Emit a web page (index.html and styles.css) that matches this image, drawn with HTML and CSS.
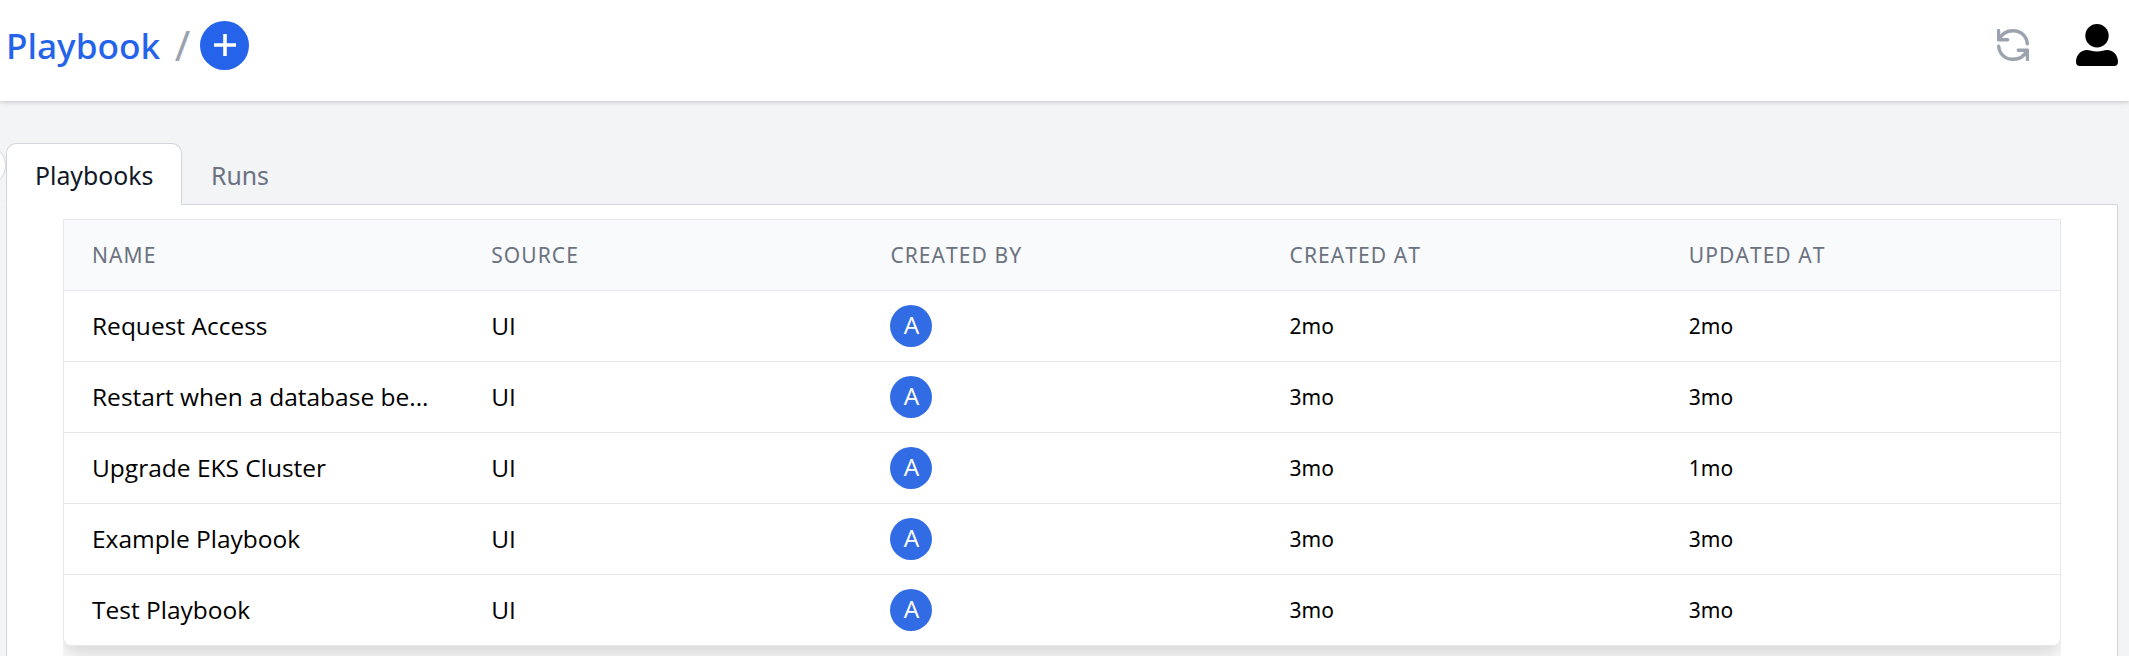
FILE: index.html
```html
<!DOCTYPE html>
<html lang="en">
<head>
<meta charset="utf-8">
<title>Playbook</title>
<link rel="stylesheet" href="styles.css">
</head>
<body>
<header class="topbar">
  <nav class="crumbs">
    <a class="crumb-link">Playbook</a>
    <span class="crumb-sep">/</span>
    <button class="add" aria-label="Add playbook">
      <svg viewBox="0 0 24 24"><path d="M12 1v22M1 12h22"/></svg>
    </button>
  </nav>
  <div class="actions">
    <svg class="refresh" viewBox="0 0 32 32"><path d="M1.5 1.5v9.2h9.2M2.1 10.5C4.6 5 9.6 1.7 16 1.7c7.8 0 13.6 5.300 14.300 13M30.500 30.500v-9.200h-9.200M29.900 21.500c-2.500 5.500-7.500 8.800-13.900 8.800-7.800 0-13.600-5.300-14.300-13"/></svg>
    <svg class="user" viewBox="0 0 42 42"><circle cx="21" cy="11.700" r="11.700"/><path d="M11 26c2.500 0 5.600 1.500 10 1.500S28.500 26 31 26c6.500 0 11 5.500 11 11.700C42 40.500 40.700 42 38 42H4c-2.700 0-4-1.500-4-4.300C0 31.500 4.500 26 11 26z"/></svg>
  </div>
</header>
<main class="content">
  <span class="handle"></span>
  <div class="tabs">
    <div class="tab tab-active">Playbooks</div>
    <div class="tab">Runs</div>
  </div>
  <section class="panel">
    <div class="clip">
      <div class="table">
        <div class="row head"><div>Name</div><div>Source</div><div>Created By</div><div>Created At</div><div>Updated At</div></div>
        <div class="row"><div class="name">Request Access</div><div class="source">UI</div><div><span class="avatar">A</span></div><div class="age">2mo</div><div class="age">2mo</div></div>
        <div class="row"><div class="name">Restart when a database be...</div><div class="source">UI</div><div><span class="avatar">A</span></div><div class="age">3mo</div><div class="age">3mo</div></div>
        <div class="row"><div class="name">Upgrade EKS Cluster</div><div class="source">UI</div><div><span class="avatar">A</span></div><div class="age">3mo</div><div class="age">1mo</div></div>
        <div class="row"><div class="name">Example Playbook</div><div class="source">UI</div><div><span class="avatar">A</span></div><div class="age">3mo</div><div class="age">3mo</div></div>
        <div class="row"><div class="name">Test Playbook</div><div class="source">UI</div><div><span class="avatar">A</span></div><div class="age">3mo</div><div class="age">3mo</div></div>
      </div>
    </div>
  </section>
</main>
</body>
</html>
```
FILE: styles.css
```css
* { box-sizing: border-box; }
body {
  margin: 0;
  height: 656px;
  overflow: hidden;
  display: flex;
  flex-direction: column;
  background: #f3f4f6;
  font-family: "Open Sans", sans-serif;
  color: #000;
}
.topbar {
  flex: none;
  height: 101px;
  padding: 0 11px 11px 6px;
  display: flex;
  align-items: center;
  justify-content: space-between;
  background: #fff;
  box-shadow: 0 2px 5px rgba(0, 0, 0, .1), 0 1px 3px rgba(0, 0, 0, .08);
}
.crumbs { display: flex; align-items: center; }
.crumb-link { font: 500 35.2px/48px "Noto Sans", sans-serif; color: #2563eb; }
.crumb-sep { margin: 0 10px 0 14.5px; font: 42px/50px "Noto Sans", sans-serif; color: #9ca3af; }
.add {
  width: 49px;
  height: 49px;
  padding: 0;
  border: 0;
  border-radius: 50%;
  display: grid;
  place-items: center;
  background: #2563eb;
}
.add svg { width: 24px; height: 24px; fill: none; stroke: #fff; stroke-width: 3.6; }
.actions { display: flex; align-items: center; gap: 47px; }
.refresh { width: 32px; height: 32px; fill: none; stroke: #9ca3af; stroke-width: 3.4; stroke-linecap: round; stroke-linejoin: round; }
.user { width: 42px; height: 42px; }
.content {
  flex: 1;
  min-height: 0;
  position: relative;
  padding: 42px 11px 0 6px;
  display: flex;
  flex-direction: column;
}
.handle {
  position: absolute;
  left: -37px;
  top: 43px;
  width: 43px;
  height: 43px;
  border: 1px solid #d1d5db;
  border-radius: 50%;
  background: #fff;
}
.tabs { flex: none; display: flex; position: relative; }
.tab {
  height: 62px;
  padding: 0 28px;
  border: 1px solid transparent;
  font: 24.8px/62px "Noto Sans", sans-serif;
  color: #6b7280;
}
.tab-active {
  width: 176px;
  border-color: #d1d5db;
  border-bottom-color: #fff;
  border-radius: 10px 10px 0 0;
  background: #fff;
  color: #111827;
}
.panel {
  flex: 1;
  min-height: 0;
  margin-top: -1px;
  padding: 14px 56px 0;
  border: 1px solid #d1d5db;
  border-bottom: 0;
  background: #fff;
}
.clip { height: 100%; overflow: hidden; }
.table {
  border: 1px solid #e5e7eb;
  border-radius: 0 0 8px 8px;
  box-shadow: 0 10px 18px rgba(0, 0, 0, .15);
}
.row {
  height: 71px;
  display: grid;
  grid-template-columns: repeat(5, 1fr);
  align-items: center;
  border-bottom: 1px solid #e5e7eb;
  font-size: 24.5px;
}
.row:last-child { border-bottom: 0; height: 70px; }
.row > div { padding: 0 28px; }
.head {
  background: #f9fafb;
  color: #6b7280;
  font: 21px/28px "Noto Sans", sans-serif;
  font-kerning: none;
  letter-spacing: 1.07px;
  text-transform: uppercase;
}
.name, .source { line-height: 36px; white-space: nowrap; }
.age { font: 21px/28px "Noto Sans", sans-serif; }
.avatar {
  width: 42px;
  height: 42px;
  border-radius: 50%;
  display: grid;
  place-items: center;
  background: #326ce5;
  color: #fff;
  line-height: 40px;
  padding-bottom: 2px;
}
```
